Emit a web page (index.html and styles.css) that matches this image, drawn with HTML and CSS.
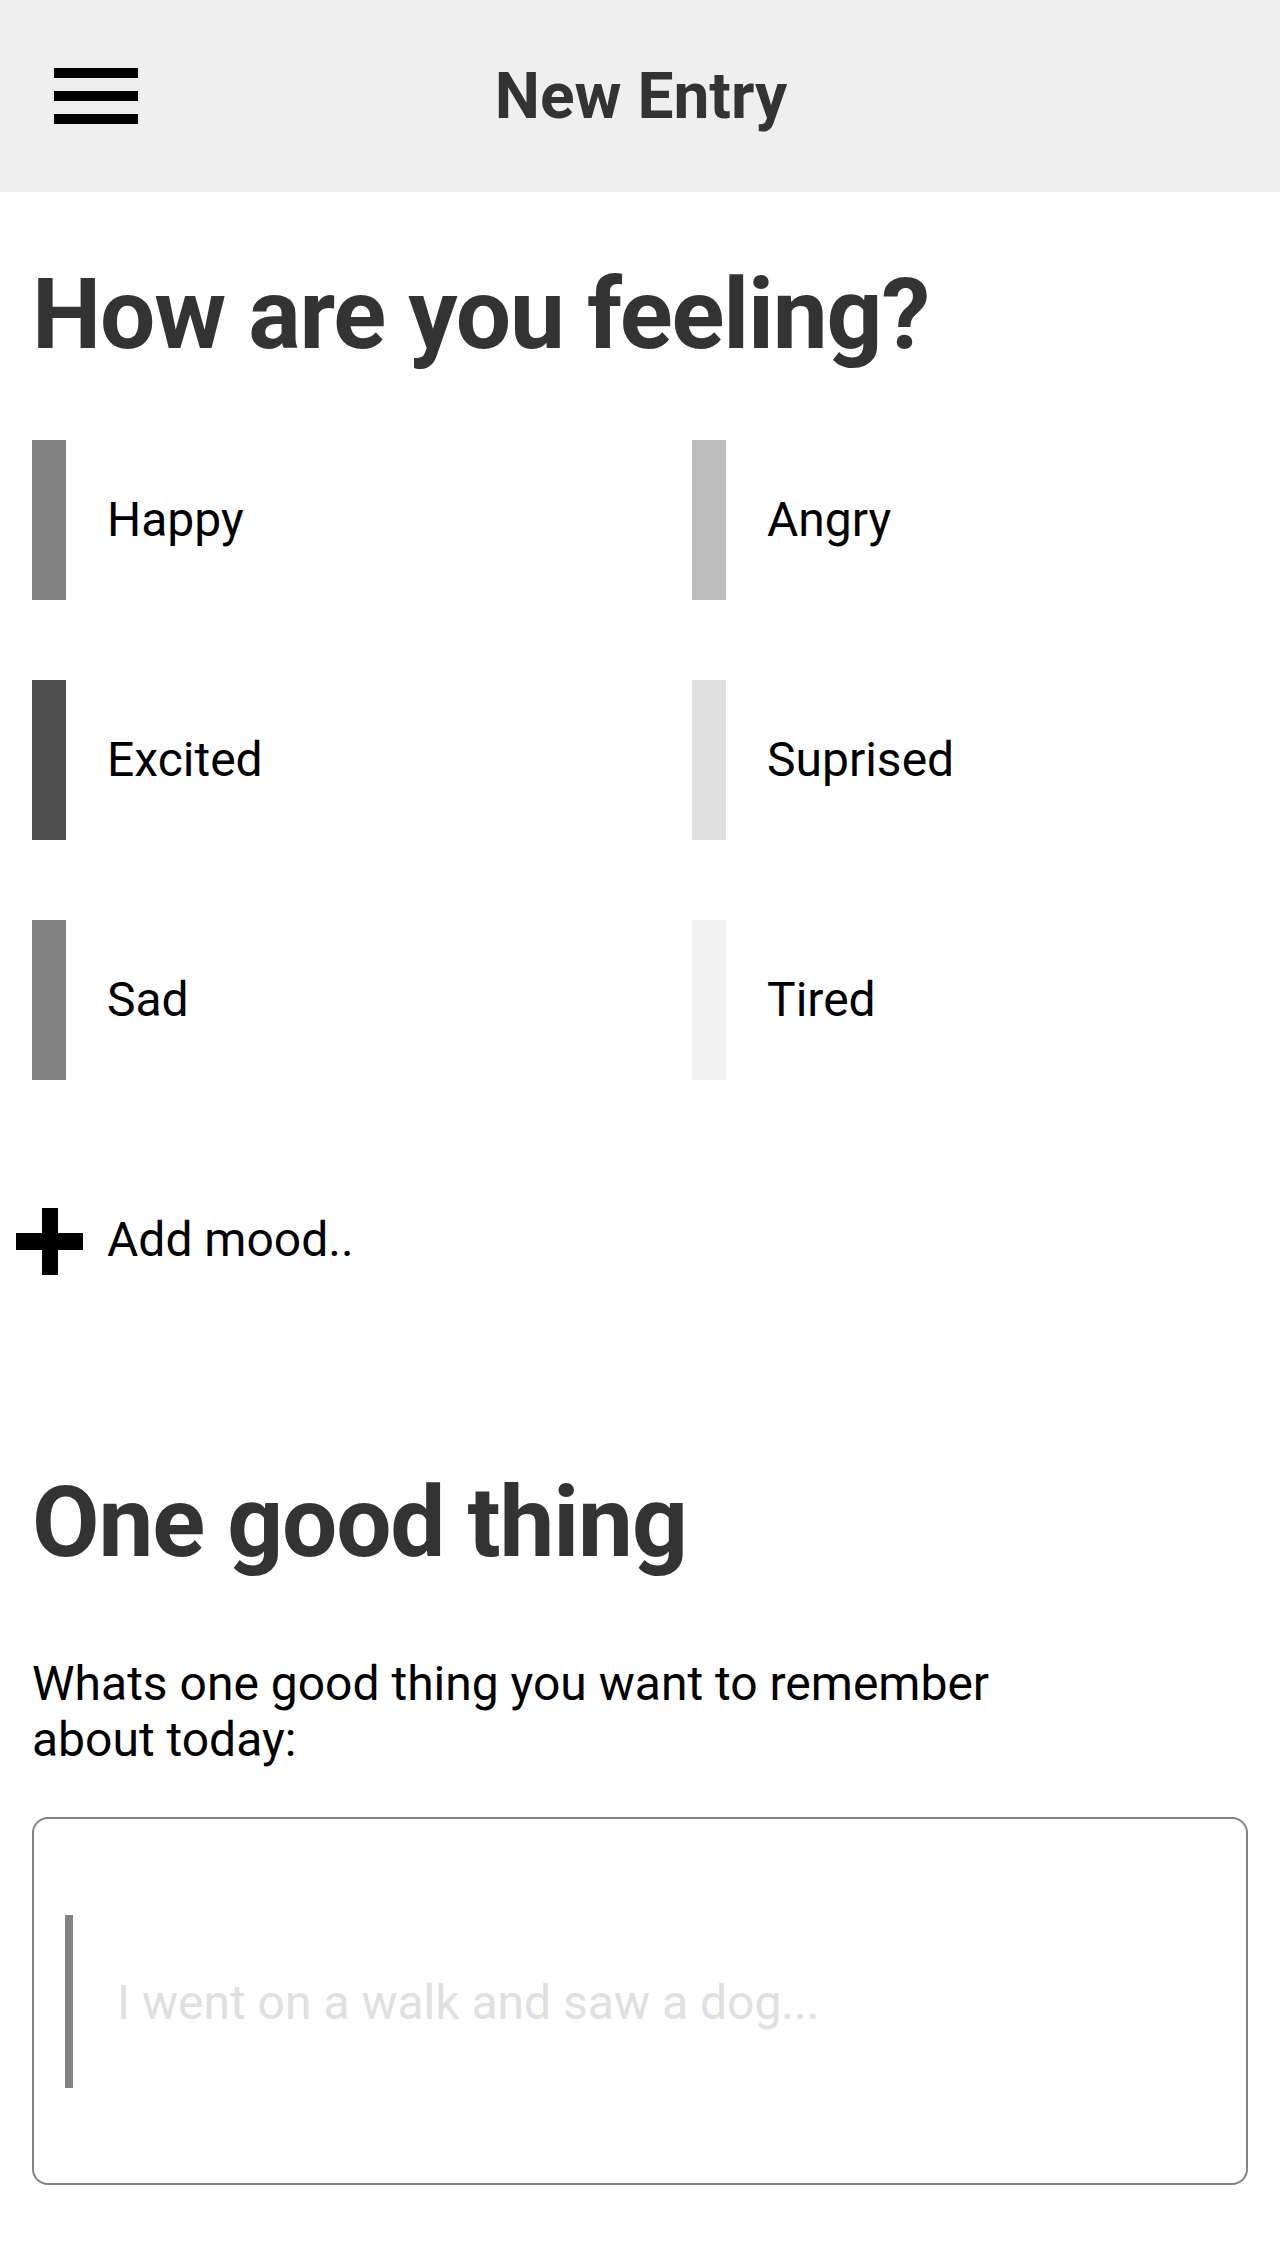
FILE: index.html
```html
<!DOCTYPE html>
<html lang="en">
<head>
<meta charset="utf-8">
<title>New Entry</title>
<link rel="stylesheet" href="styles.css">
</head>
<body>
<header class="topbar">
  <div class="menu" aria-label="Menu">
    <span class="menu-line"></span>
    <span class="menu-line"></span>
    <span class="menu-line"></span>
  </div>
  <h1 class="topbar-title">New Entry</h1>
  <div class="spacer"></div>
</header>

<main class="content">
  <h2 class="section-title feeling-title">How are you feeling?</h2>

  <div class="moods">
    <div class="mood"><span class="mood-bar gray3"></span><span class="mood-label">Happy</span></div>
    <div class="mood"><span class="mood-bar gray4"></span><span class="mood-label">Angry</span></div>
    <div class="mood"><span class="mood-bar gray2"></span><span class="mood-label">Excited</span></div>
    <div class="mood"><span class="mood-bar gray5"></span><span class="mood-label">Suprised</span></div>
    <div class="mood"><span class="mood-bar gray3"></span><span class="mood-label">Sad</span></div>
    <div class="mood"><span class="mood-bar gray6"></span><span class="mood-label">Tired</span></div>
    <div class="mood add-mood">
      <span class="add-icon">
        <svg width="67" height="67" viewBox="0 0 67 67" aria-hidden="true">
          <rect x="26" y="0" width="16" height="67" fill="#000"/>
          <rect x="0" y="25" width="67" height="17" fill="#000"/>
        </svg>
      </span>
      <span class="mood-label">Add mood..</span>
    </div>
  </div>

  <h2 class="section-title good-title">One good thing</h2>
  <p class="prompt">Whats one good thing you want to remember about today:</p>

  <div class="entry-box">
    <span class="entry-bar"></span>
    <span class="entry-placeholder">I went on a walk and saw a dog...</span>
  </div>
</main>
</body>
</html>
```

FILE: styles.css
```css
html, body {
  margin: 0;
  padding: 0;
  background: #ffffff;
}

body {
  font-family: Roboto, "Liberation Sans", Arial, sans-serif;
  color: #000000;
}

.topbar {
  height: 192px;
  background: #efefef;
  display: grid;
  grid-template-columns: 1fr auto 1fr;
  align-items: center;
  padding: 0 54px;
}

.menu {
  display: flex;
  flex-direction: column;
  gap: 13px;
  width: 84px;
}

.menu-line {
  display: block;
  height: 10px;
  background: #000000;
}

.topbar-title {
  margin: 0;
  font-size: 64px;
  font-weight: 700;
  color: #333333;
  line-height: 1.172;
  padding-left: 2px;
}

.content {
  padding: 0 32px;
}

.section-title {
  margin: 0;
  font-size: 98px;
  font-weight: 700;
  letter-spacing: -1.15px;
  line-height: 98px;
  color: #333333;
}

.feeling-title {
  padding-top: 74px;
}

.moods {
  margin-top: 76px;
  display: grid;
  grid-template-columns: 608px 1fr;
  column-gap: 52px;
  row-gap: 80px;
}

.mood {
  display: flex;
  align-items: center;
  height: 160px;
  gap: 41px;
}

.mood-bar {
  display: block;
  width: 34px;
  height: 160px;
  flex: none;
}

.gray2 { background: #4f4f4f; }
.gray3 { background: #828282; }
.gray4 { background: #bdbdbd; }
.gray5 { background: #e0e0e0; }
.gray6 { background: #f2f2f2; }

.mood-label {
  font-size: 48px;
  line-height: 56px;
  color: #000000;
}

.add-mood {
  grid-column: 1 / -1;
}

.add-icon {
  display: flex;
  justify-content: center;
  align-items: center;
  width: 34px;
  flex: none;
  margin-top: 3px;
}

.add-icon svg {
  display: block;
  flex: none;
}

.good-title {
  margin-top: 154px;
}

.prompt {
  margin: 84px 0 0 0;
  max-width: 1000px;
  font-size: 48px;
  line-height: 56px;
  color: #000000;
}

.entry-box {
  margin-top: 49px;
  height: 364px;
  border: 2px solid #828282;
  border-radius: 16px;
  display: flex;
  align-items: center;
  padding-left: 31px;
  gap: 44px;
}

.entry-bar {
  display: block;
  width: 8px;
  height: 173px;
  background: #828282;
  flex: none;
}

.entry-placeholder {
  font-size: 48px;
  line-height: 56px;
  color: #e0e0e0;
  padding-top: 4px;
}
```
